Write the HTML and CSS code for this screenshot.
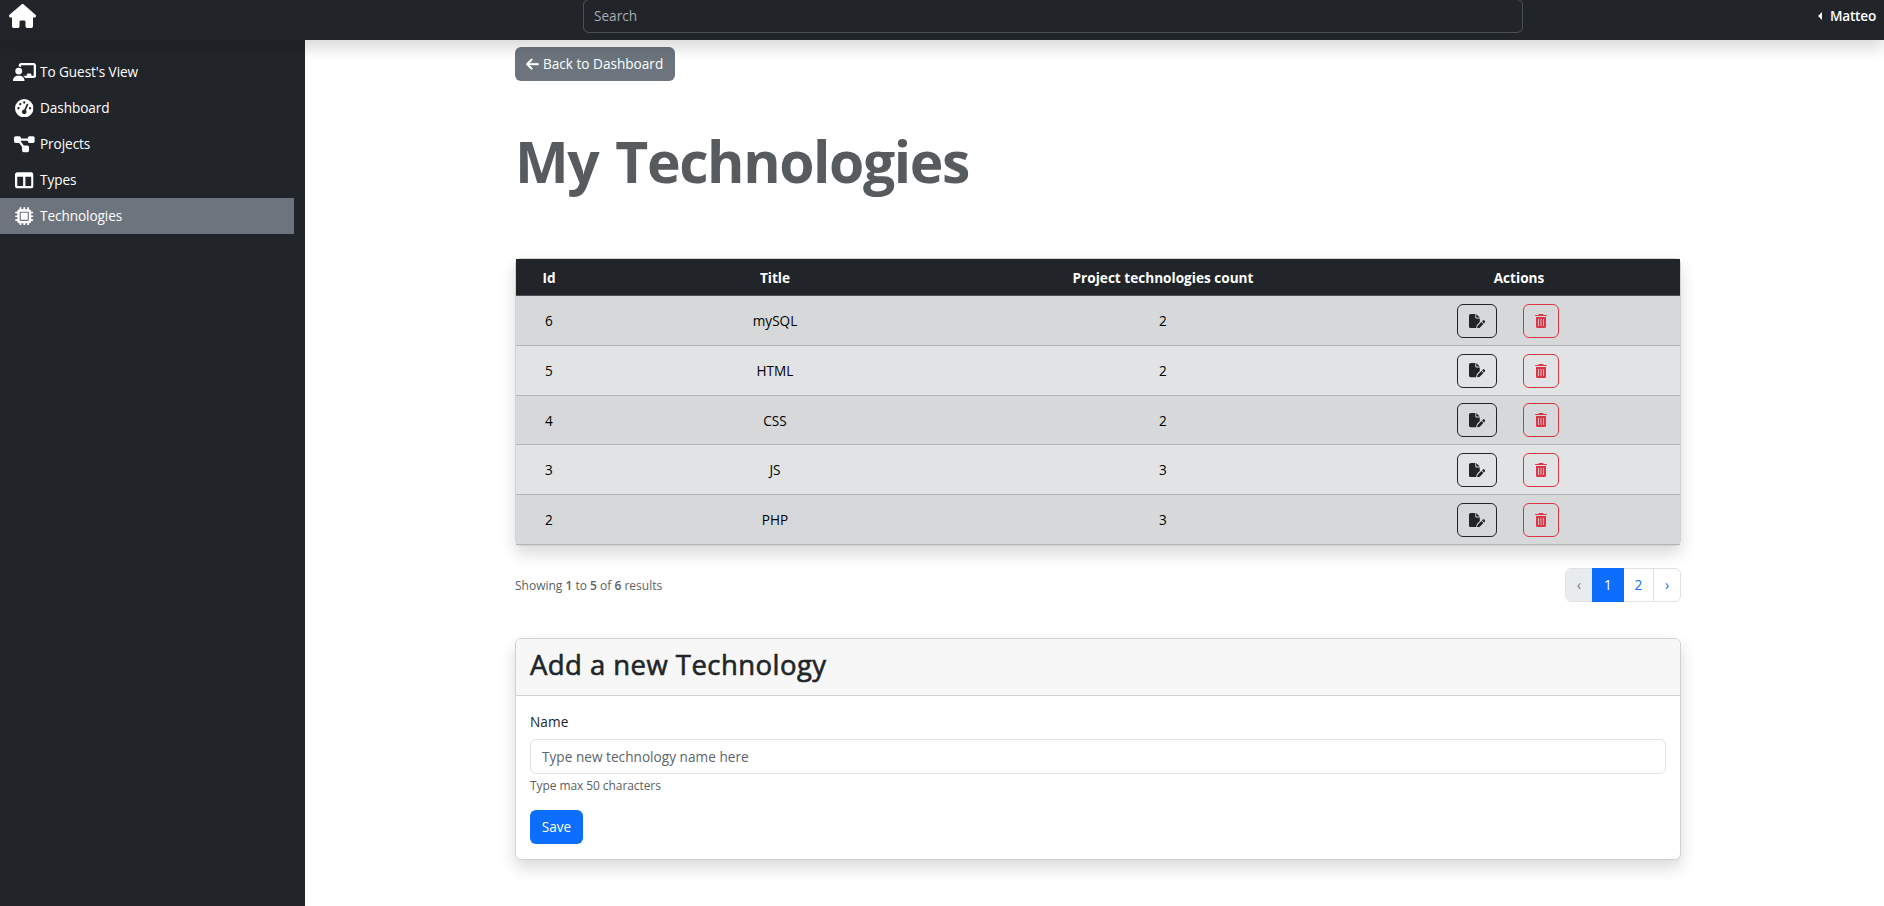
FILE: index.html
```html
<!DOCTYPE html>
<html lang="en">
<head>
<meta charset="utf-8">
<title>My Technologies</title>
<link rel="stylesheet" href="styles.css">
</head>
<body>
<svg class="sprite" aria-hidden="true">
  <symbol id="house" viewBox="0 0 576 512"><path d="M575.8 255.5c0 18-15 32.1-32 32.1h-32l.7 160.2c0 2.7-.2 5.4-.5 8.1V472c0 22.1-17.9 40-40 40H392c-22.1 0-40-17.9-40-40V384c0-17.7-14.3-32-32-32H256c-17.7 0-32 14.3-32 32v88c0 22.1-17.9 40-40 40H104c-22.1 0-40-17.9-40-40V287.6H32c-18 0-32-14-32-32.1c0-9 3-17 10-24L266.4 8c7-7 15-8 22-8s15 2 21 7L564.8 231.5c8 7 12 15 11 24z"/></symbol>
  <symbol id="board" viewBox="0 0 640 512"><path d="M160 64c0-35.3 28.7-64 64-64H576c35.3 0 64 28.7 64 64V352c0 35.3-28.7 64-64 64H336.8c-11.8-25.5-29.9-47.5-52.4-64H384V320c0-17.7 14.3-32 32-32h64c17.7 0 32 14.3 32 32v32h64V64L224 64v49.1C205.2 102.2 183.3 96 160 96V64zm0 64a96 96 0 1 1 0 192 96 96 0 1 1 0-192zM133.3 352h53.3C260.3 352 320 411.7 320 485.3c0 14.7-11.9 26.7-26.7 26.7H26.7C11.9 512 0 500.1 0 485.3C0 411.7 59.7 352 133.3 352z"/></symbol>
  <symbol id="gauge" viewBox="0 0 512 512"><path d="M0 256a256 256 0 1 1 512 0A256 256 0 1 1 0 256zM288 96a32 32 0 1 0 -64 0 32 32 0 1 0 64 0zM256 416c35.3 0 64-28.7 64-64c0-17.4-6.9-33.1-18.1-44.6L366 161.7c5.3-12.1-.2-26.3-12.3-31.6s-26.3 .2-31.6 12.3L257.9 288c-.6 0-1.3 0-1.9 0c-35.3 0-64 28.7-64 64s28.7 64 64 64zM176 144a32 32 0 1 0 -64 0 32 32 0 1 0 64 0zM96 288a32 32 0 1 0 0-64 32 32 0 1 0 0 64zm352-32a32 32 0 1 0 -64 0 32 32 0 1 0 64 0z"/></symbol>
  <symbol id="diagram" viewBox="0 0 576 512"><path d="M0 80C0 53.5 21.5 32 48 32h96c26.5 0 48 21.5 48 48V96H384V80c0-26.5 21.5-48 48-48h96c26.5 0 48 21.5 48 48v96c0 26.5-21.5 48-48 48H432c-26.5 0-48-21.5-48-48V160H192v16c0 1.7-.1 3.4-.3 5L272 288h96c26.5 0 48 21.5 48 48v96c0 26.5-21.5 48-48 48H272c-26.5 0-48-21.5-48-48V336c0-1.7 .1-3.4 .3-5L144 224H48c-26.5 0-48-21.5-48-48V80z"/></symbol>
  <symbol id="columns" viewBox="0 0 512 512"><path d="M0 96C0 60.7 28.7 32 64 32H448c35.3 0 64 28.7 64 64V416c0 35.3-28.7 64-64 64H64c-35.3 0-64-28.7-64-64V96zm64 64V416H224V160H64zm384 0H288V416H448V160z"/></symbol>
  <symbol id="chip" viewBox="0 0 512 512"><path d="M176 24c0-13.3-10.7-24-24-24s-24 10.7-24 24V64c-35.3 0-64 28.7-64 64H24c-13.3 0-24 10.7-24 24s10.7 24 24 24H64v56H24c-13.3 0-24 10.7-24 24s10.7 24 24 24H64v56H24c-13.3 0-24 10.7-24 24s10.7 24 24 24H64c0 35.3 28.7 64 64 64v40c0 13.3 10.7 24 24 24s24-10.7 24-24V448h56v40c0 13.3 10.7 24 24 24s24-10.7 24-24V448h56v40c0 13.3 10.7 24 24 24s24-10.7 24-24V448c35.3 0 64-28.7 64-64h40c13.3 0 24-10.7 24-24s-10.7-24-24-24H448V280h40c13.3 0 24-10.7 24-24s-10.7-24-24-24H448V176h40c13.3 0 24-10.7 24-24s-10.7-24-24-24H448c0-35.3-28.7-64-64-64V24c0-13.3-10.7-24-24-24s-24 10.7-24 24V64H280V24c0-13.3-10.7-24-24-24s-24 10.7-24 24V64H176V24zM160 128H352c17.7 0 32 14.3 32 32V352c0 17.7-14.3 32-32 32H160c-17.7 0-32-14.3-32-32V160c0-17.7 14.3-32 32-32zm192 32H160V352H352V160z"/></symbol>
  <symbol id="arrow" viewBox="0 0 448 512"><path d="M9.4 233.4c-12.5 12.5-12.5 32.8 0 45.3l160 160c12.5 12.5 32.8 12.5 45.3 0s12.5-32.8 0-45.3L109.2 288 416 288c17.7 0 32-14.3 32-32s-14.3-32-32-32l-306.7 0L214.600 118.600c12.500-12.500 12.500-32.800 0-45.300s-32.800-12.500-45.300 0l-160 160z"/></symbol>
  <symbol id="pen" viewBox="0 0 576 512"><path d="M0 64C0 28.7 28.7 0 64 0H224V128c0 17.7 14.3 32 32 32H384V285.7l-86.8 86.8c-10.3 10.3-17.5 23.1-21 37.2l-18.7 74.9c-2.3 9.2-1.8 18.8 1.3 27.5H64c-35.3 0-64-28.7-64-64V64zm384 64H256V0L384 128zM549.8 235.7l14.4 14.4c15.6 15.6 15.6 40.9 0 56.6l-29.4 29.4-71-71 29.4-29.4c15.6-15.6 40.9-15.6 56.6 0zM311.9 417L441.1 287.8l71 71L382.9 487.9c-4.1 4.1-9.2 7-14.9 8.4l-60.1 15c-5.5 1.4-11.2-.2-15.2-4.2s-5.6-9.7-4.2-15.2l15-60.1c1.4-5.6 4.3-10.8 8.4-14.9z"/></symbol>
  <symbol id="trash" viewBox="0 0 12 14"><path fill-rule="evenodd" d="M3.700 .3Q3.900 0 4.300 0H7.700Q8.100 0 8.300 .3L8.700 1H11.300Q12 1 12 1.500T11.300 2H.7Q0 2 0 1.500T.7 1H3.300zM1 3H11V12.500Q11 14 9.500 14H2.500Q1 14 1 12.500zM3 5V12H3.800V5zM5.600 5V12H6.400V5zM8.200 5V12H9V5z"/></symbol>
</svg>
<header class="topbar">
  <a class="brand"><svg><use href="#house"/></svg></a>
  <div class="search">Search</div>
  <div class="user"><i class="caret"></i><span>Matteo</span></div>
</header>
<div class="layout">
  <nav class="sidebar">
    <a class="nav-item"><span class="nav-icon"><svg class="w-board"><use href="#board"/></svg></span><span>To Guest's View</span></a>
    <a class="nav-item"><span class="nav-icon"><svg class="w-square"><use href="#gauge"/></svg></span><span>Dashboard</span></a>
    <a class="nav-item"><span class="nav-icon"><svg class="w-diagram"><use href="#diagram"/></svg></span><span>Projects</span></a>
    <a class="nav-item"><span class="nav-icon"><svg class="w-square"><use href="#columns"/></svg></span><span>Types</span></a>
    <a class="nav-item active"><span class="nav-icon"><svg class="w-square"><use href="#chip"/></svg></span><span>Technologies</span></a>
  </nav>
  <main class="content">
    <a class="back"><svg><use href="#arrow"/></svg><span>Back to Dashboard</span></a>
    <h1 class="title">My Technologies</h1>
    <div class="table-box">
      <table class="table">
        <colgroup><col class="c-id"><col class="c-title"><col class="c-count"><col class="c-actions"></colgroup>
        <thead><tr><th>Id</th><th>Title</th><th>Project technologies count</th><th>Actions</th></tr></thead>
        <tbody>
          <tr><td>6</td><td>mySQL</td><td>2</td><td><div class="actions"><a class="btn edit"><svg><use href="#pen"/></svg></a><a class="btn delete"><svg><use href="#trash"/></svg></a></div></td></tr>
          <tr><td>5</td><td>HTML</td><td>2</td><td><div class="actions"><a class="btn edit"><svg><use href="#pen"/></svg></a><a class="btn delete"><svg><use href="#trash"/></svg></a></div></td></tr>
          <tr><td>4</td><td>CSS</td><td>2</td><td><div class="actions"><a class="btn edit"><svg><use href="#pen"/></svg></a><a class="btn delete"><svg><use href="#trash"/></svg></a></div></td></tr>
          <tr><td>3</td><td>JS</td><td>3</td><td><div class="actions"><a class="btn edit"><svg><use href="#pen"/></svg></a><a class="btn delete"><svg><use href="#trash"/></svg></a></div></td></tr>
          <tr><td>2</td><td>PHP</td><td>3</td><td><div class="actions"><a class="btn edit"><svg><use href="#pen"/></svg></a><a class="btn delete"><svg><use href="#trash"/></svg></a></div></td></tr>
        </tbody>
      </table>
    </div>
    <div class="pager-row">
      <p class="summary">Showing <b>1</b> to <b>5</b> of <b>6</b> results</p>
      <div class="pager"><span class="page off">‹</span><span class="page current">1</span><span class="page two">2</span><span class="page next">›</span></div>
    </div>
    <section class="card">
      <div class="card-head"><h2>Add a new Technology</h2></div>
      <div class="card-body">
        <label class="label">Name</label>
        <div class="field"><span>Type new technology name here</span></div>
        <div class="help">Type max 50 characters</div>
        <button class="save">Save</button>
      </div>
    </section>
  </main>
</div>
</body>
</html>
```
FILE: styles.css
```css
* { box-sizing: border-box; }
body { margin: 0; height: 906px; overflow: hidden; background: #fff; color: #212529; font: 13.6px/21.6px "Open Sans", "Noto Sans", sans-serif; }
svg { display: block; fill: currentColor; }
.sprite { display: none; }
.topbar { position: relative; z-index: 2; display: flex; align-items: center; height: 40px; padding: 0 8px 8px 9px; background: #212529; color: #fff; box-shadow: 0 8px 16px rgba(0,0,0,.15); }
.brand { width: 27px; margin-right: 547px; }
.brand svg { width: 27px; height: 24px; margin-top: -1px; }
.search { width: 940px; height: 34px; flex: none; border: 1px solid #495057; border-radius: 6px; padding: 5px 10px; color: #a7acb1; }
.user { display: flex; align-items: center; gap: 8px; margin-left: auto; font-weight: 600; letter-spacing: -.2px; }
.caret { border-top: 4px solid transparent; border-bottom: 4px solid transparent; border-right: 4px solid #fff; }
.layout { display: flex; height: 866px; }
.sidebar { width: 305px; flex: none; background: #212529; padding: 14px 11px 0 0; color: #fff; letter-spacing: -.07px; }
.nav-item { display: flex; align-items: center; height: 36px; padding-left: 13px; gap: 4px; }
.nav-icon { width: 23px; display: flex; justify-content: center; }
.nav-icon svg { height: 18.5px; }
.w-board { width: 23px; }
.w-square { width: 18.5px; }
.w-diagram { width: 20.8px; }
.active { background: #6c757d; }
.content { width: 1166px; margin-left: 210px; padding-top: 7px; }
.back { display: flex; align-items: center; gap: 4px; width: 160px; height: 34px; padding-left: 11px; background: #6c757d; color: #fff; border-radius: 6px; white-space: nowrap; }
.back svg { width: 13px; height: 14.4px; stroke: currentColor; stroke-width: 12px; }
.title { margin: 46px 0 62px; height: 69px; font-size: 57px; line-height: 69px; font-weight: 700; letter-spacing: -1.4px; word-spacing: 3.5px; color: #585b5e; white-space: nowrap; }
.table-box { height: 288px; border: 1px solid rgba(0,0,0,.175); border-radius: 6px; box-shadow: 0 8px 16px rgba(0,0,0,.15); }
.table { width: 1164px; table-layout: fixed; border-collapse: separate; border-spacing: 0; text-align: center; color: #000; }
.c-id { width: 66px; }
.c-title { width: 386px; }
.c-count { width: 390px; }
.c-actions { width: 322px; }
.table th { height: 37px; padding: 2px 0 0; background: #212529; color: #fff; border-bottom: 1px solid #4d5154; font-weight: 700; }
.table td { height: 49.8px; padding: 1px 0 0; border-bottom: 1px solid #b3b5b7; background: #e2e3e5; }
.table tbody tr:nth-child(odd) td { background: #d7d8da; }
.actions { display: flex; justify-content: center; gap: 26px; padding-right: 22px; }
.btn { display: flex; align-items: center; justify-content: center; height: 34px; border: 1px solid; border-radius: 6px; }
.edit { width: 40px; color: #212529; }
.edit svg { width: 16.2px; height: 14.4px; }
.delete { width: 36px; color: #dc3545; }
.delete svg { width: 12px; height: 14px; margin-right: 1px; }
.pager-row { display: flex; justify-content: space-between; align-items: center; height: 34px; margin-top: 22px; }
.summary { margin: 2px 0 0; font-size: 12px; color: #5b5f63; white-space: nowrap; }
.summary b { font-weight: 600; }
.pager { display: flex; width: 116px; height: 34px; border: 1px solid #dee2e6; border-radius: 6px; color: #0d6efd; text-align: center; line-height: 32px; }
.page { width: 26px; flex: none; }
.off { background: #e9ecef; color: #73797e; border-radius: 5px 0 0 5px; }
.current { width: 32px; margin: -1px 0; line-height: 34px; background: #0d6efd; color: #fff; }
.two { width: 30px; border-right: 1px solid #dee2e6; }
.card { margin-top: 36px; height: 222px; border: 1px solid #d0d1d2; border-radius: 6px; box-shadow: 0 8px 16px rgba(0,0,0,.15); background: #fff; }
.card-head { height: 57px; padding: 7px 14px; background: #f7f7f7; border-bottom: 1px solid #d0d1d2; border-radius: 5px 5px 0 0; }
.card h2 { margin: 0; font-size: 27.5px; line-height: 37px; font-weight: 500; letter-spacing: .45px; -webkit-text-stroke: .6px #212529; white-space: nowrap; }
.card-body { padding: 15px 14px; }
.label { display: block; height: 28px; letter-spacing: .1px; }
.field { height: 35px; border: 1px solid #dee2e6; border-radius: 6px; padding: 6px 11px; color: #5e6368; letter-spacing: .03px; }
.help { font-size: 12px; line-height: 19px; margin-top: 2px; letter-spacing: -.08px; color: #5b5f63; }
.save { display: block; margin: 15px 0 0; width: 53px; height: 34px; padding: 0; border: 0; border-radius: 6px; background: #0d6efd; color: #fff; font: inherit; }
```
